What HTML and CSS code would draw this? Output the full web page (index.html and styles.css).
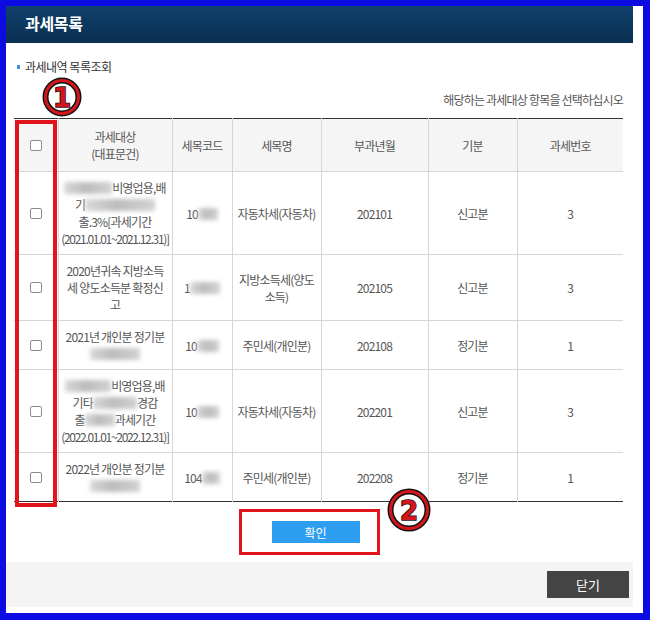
FILE: index.html
```html
<!DOCTYPE html>
<html>
<head>
  <meta charset="UTF-8" />
  <title>과세목록</title>
  <link rel="stylesheet" href="styles.css">
</head>
<body>
  <div class="window">
    <h1 class="title">과세목록</h1>

    <div class="content">
      <div class="section-label"><span class="dot"></span>과세내역 목록조회</div>
      <div class="guide">해당하는 과세대상 항목을 선택하십시오</div>

      <table class="tax-table">
        <colgroup>
          <col style="width:44px">
          <col style="width:114px">
          <col style="width:60px">
          <col style="width:89px">
          <col style="width:107px">
          <col style="width:89px">
          <col style="width:106px">
        </colgroup>
        <thead>
          <tr>
            <th><input type="checkbox" class="check"></th>
            <th>과세대상<br>(대표문건)</th>
            <th>세목코드</th>
            <th>세목명</th>
            <th>부과년월</th>
            <th>기분</th>
            <th>과세번호</th>
          </tr>
        </thead>
        <tbody>
          <tr>
            <td><input type="checkbox" class="check"></td>
            <td class="subject"><span class="mask" style="width:48px"></span>비영업용,배<br>기<span class="mask" style="width:70px"></span><br>출.3%[과세기간<br><span class="date">(2021.01.01~2021.12.31)]</span></td>
            <td>10<span class="mask" style="width:20px"></span></td>
            <td>자동차세(자동차)</td>
            <td>202101</td>
            <td>신고분</td>
            <td>3</td>
          </tr>
          <tr>
            <td><input type="checkbox" class="check"></td>
            <td class="subject">2020년귀속 지방소득<br>세 양도소득분 확정신<br>고</td>
            <td>1<span class="mask" style="width:30px"></span></td>
            <td>지방소득세(양도<br>소득)</td>
            <td>202105</td>
            <td>신고분</td>
            <td>3</td>
          </tr>
          <tr>
            <td><input type="checkbox" class="check"></td>
            <td class="subject">2021년 개인분 정기분<br><span class="mask" style="width:50px"></span></td>
            <td>10<span class="mask" style="width:22px"></span></td>
            <td>주민세(개인분)</td>
            <td>202108</td>
            <td>정기분</td>
            <td>1</td>
          </tr>
          <tr>
            <td><input type="checkbox" class="check"></td>
            <td class="subject"><span class="mask" style="width:46px"></span>비영업용,배<br>기타<span class="mask" style="width:44px"></span>경감<br>출<span class="mask" style="width:30px"></span>과세기간<br><span class="date">(2022.01.01~2022.12.31)]</span></td>
            <td>10<span class="mask" style="width:22px"></span></td>
            <td>자동차세(자동차)</td>
            <td>202201</td>
            <td>신고분</td>
            <td>3</td>
          </tr>
          <tr>
            <td><input type="checkbox" class="check"></td>
            <td class="subject">2022년 개인분 정기분<br><span class="mask" style="width:50px"></span></td>
            <td>104<span class="mask" style="width:18px"></span></td>
            <td>주민세(개인분)</td>
            <td>202208</td>
            <td>정기분</td>
            <td>1</td>
          </tr>
        </tbody>
      </table>

      <div class="actions">
        <button class="btn-confirm">확인</button>
      </div>
    </div>

    <div class="footer">
      <button class="btn-close">닫기</button>
    </div>

    <!-- 표시용 주석 -->
    <div class="mark-box mark-box-check"></div>
    <div class="mark-box mark-box-confirm"></div>
    <svg class="mark mark-one" width="40" height="40" viewBox="0 0 40 40">
      <circle cx="20" cy="20" r="16.5" fill="#fff" stroke="#111" stroke-width="6"/>
      <circle cx="20" cy="20" r="16.5" fill="none" stroke="#d4161c" stroke-width="3"/>
      <text x="20" y="29.5" text-anchor="middle" class="mark-num">1</text>
    </svg>
    <svg class="mark mark-two" width="44" height="44" viewBox="0 0 44 44">
      <circle cx="22" cy="22" r="18.5" fill="#fff" stroke="#111" stroke-width="6"/>
      <circle cx="22" cy="22" r="18.5" fill="none" stroke="#d4161c" stroke-width="3"/>
      <text x="22" y="32" text-anchor="middle" class="mark-num">2</text>
    </svg>
  </div>
</body>
</html>
```

FILE: styles.css
```css
html, body {
  margin: 0;
  padding: 0;
  height: 620px;
  overflow: hidden;
}
body {
  background-color: #0c0ce2;
  font-family: "Noto Sans CJK KR", "Noto Sans", sans-serif;
  color: #555;
}
.window {
  position: relative;
  width: 637px;
  height: 607px;
  margin: 6px 0 0 6px;
  background-color: #fff;
}
.title {
  width: 608px;
  height: 37px;
  margin: 0;
  padding-left: 19px;
  background: linear-gradient(#0f416c, #0b2f52);
  color: #fff;
  font-size: 16px;
  font-weight: bold;
  line-height: 34px;
  letter-spacing: -0.3px;
}
.content {
  padding: 15px 20px 0 8px;
}
.section-label {
  display: flex;
  align-items: center;
  font-size: 12px;
  line-height: 17px;
  color: #333;
  letter-spacing: -0.5px;
}
.dot {
  width: 3px;
  height: 4px;
  margin: 0 5px 0 3px;
  background-color: #3a9ad9;
}
.guide {
  margin-top: 16px;
  text-align: right;
  font-size: 12px;
  line-height: 17px;
  letter-spacing: -0.8px;
  color: #555;
}
.tax-table {
  width: 609px;
  margin-top: 10px;
  border-collapse: collapse;
  table-layout: fixed;
  border-top: 1px solid #333;
  border-bottom: 1px solid #333;
}
.tax-table th,
.tax-table td {
  padding: 7px 0;
  border-left: 1px solid #d6d6d6;
  border-bottom: 1px solid #d6d6d6;
  font-size: 12px;
  font-weight: normal;
  line-height: 17px;
  letter-spacing: -0.8px;
  text-align: center;
  color: #555;
  white-space: nowrap;
}
.tax-table th {
  padding: 9px 0;
  background-color: #f5f5f5;
}
.tax-table th:first-child,
.tax-table td:first-child {
  border-left: none;
}
.tax-table tbody tr:last-child td {
  border-bottom: none;
}
.date {
  letter-spacing: -1.3px;
}
.check {
  appearance: none;
  display: block;
  width: 12px;
  height: 11px;
  margin: 0 auto;
  border: 1px solid #8c8c8c;
  border-radius: 2px;
  background-color: #fff;
}
.mask {
  display: inline-block;
  height: 12px;
  vertical-align: -1px;
  background: linear-gradient(90deg, #d8d8d8, #bcbcbc 45%, #d2d2d2);
  filter: blur(2px);
}
.actions {
  display: flex;
  justify-content: center;
  margin-top: 19px;
  padding-right: 6px;
}
.btn-confirm {
  width: 88px;
  height: 22px;
  border: none;
  background-color: #2e9ef1;
  color: #fff;
  font-family: inherit;
  font-size: 12px;
  cursor: pointer;
}
.footer {
  display: flex;
  justify-content: flex-end;
  align-items: center;
  width: 623px;
  height: 45px;
  margin-top: 19px;
  padding-right: 4px;
  background-color: #f4f4f4;
}
.btn-close {
  width: 82px;
  height: 27px;
  border: none;
  background-color: #444;
  color: #fff;
  font-family: inherit;
  font-size: 13px;
  cursor: pointer;
}
.mark-box {
  position: absolute;
  box-sizing: border-box;
  border: 4px solid #e1141b;
}
.mark-box-check {
  left: 9px;
  top: 114px;
  width: 42px;
  height: 387px;
}
.mark-box-confirm {
  left: 233px;
  top: 503px;
  width: 141px;
  height: 46px;
  border-width: 3px;
}
.mark {
  position: absolute;
}
.mark-one {
  left: 36px;
  top: 71px;
}
.mark-two {
  left: 381px;
  top: 482px;
}
.mark-num {
  font-family: "DejaVu Sans", sans-serif;
  font-size: 26px;
  font-weight: bold;
  fill: #d4161c;
  stroke: #111;
  stroke-width: 1.6px;
  paint-order: stroke;
}
```
